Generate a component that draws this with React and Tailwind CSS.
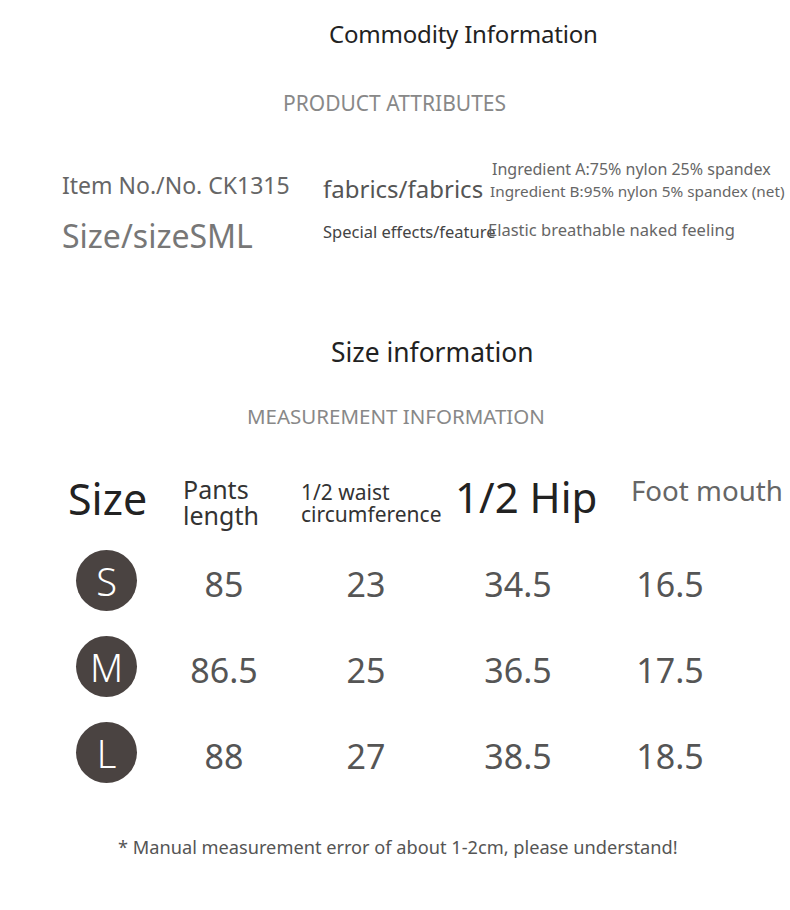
export default function App() {
  const rows = [
    ["S", "85", "23", "34.5", "16.5"],
    ["M", "86.5", "25", "36.5", "17.5"],
    ["L", "88", "27", "38.5", "18.5"],
  ];
  return (
    <div className="w-[790px] h-[910px] bg-white overflow-hidden" style={{ fontFamily: '"Noto Sans", "Open Sans", sans-serif' }}>
      <div className="h-[68px] leading-[68px] pl-[329px] text-[24px] text-[#222] tracking-[-0.2px] whitespace-nowrap">Commodity Information</div>
      <div className="h-[70px] leading-[70px] pl-[283px] text-[21px] text-[#888] whitespace-nowrap">PRODUCT ATTRIBUTES</div>

      <div className="h-[64px] flex whitespace-nowrap">
        <div className="w-[323px] shrink-0 pl-[62px] pt-[31px] text-[23px] leading-[32px] text-[#666]">Item No./No. CK1315</div>
        <div className="w-[167px] shrink-0 pt-[35px] text-[24px] leading-[32px] text-[#555]">fabrics/fabrics</div>
        <div className="flex flex-col pt-[20px]">
          <div className="pl-[2px] text-[16px] leading-[22px] text-[#666]">Ingredient A:75% nylon 25% spandex</div>
          <div className="text-[15.3px] leading-[22px] text-[#666]">Ingredient B:95% nylon 5% spandex (net)</div>
        </div>
      </div>
      <div className="h-[54px] flex whitespace-nowrap">
        <div className="w-[323px] shrink-0 pl-[62px] pt-[14px] text-[32px] leading-[40px] text-[#777]">Size/sizeSML</div>
        <div className="w-[165px] shrink-0 pt-[19px] text-[16.5px] leading-[22px] text-[#444]">Special effects/feature</div>
        <div className="pt-[17px] text-[16.5px] leading-[22px] text-[#666]">Elastic breathable naked feeling</div>
      </div>

      <div className="mt-[76px] h-[40px] leading-[40px] pl-[331px] text-[26.4px] text-[#222] whitespace-nowrap">Size information</div>
      <div className="mt-[29px] h-[30px] leading-[30px] pl-[247px] text-[20.5px] text-[#888] whitespace-nowrap">MEASUREMENT INFORMATION</div>

      <div className="mt-[39px] h-[60px] flex items-start whitespace-nowrap">
        <div className="w-[183px] shrink-0 pl-[68px] pt-[4px] text-[43px] leading-[50px] text-[#222]">Size</div>
        <div className="w-[118px] shrink-0 pt-[6px] text-[25px] leading-[26px] text-[#333]">Pants<br />length</div>
        <div className="w-[154px] shrink-0 pt-[11px] text-[21px] leading-[22px] text-[#333]">1/2 waist<br />circumference</div>
        <div className="w-[176px] shrink-0 pt-[2px] text-[42px] leading-[50px] text-[#222]">1/2 Hip</div>
        <div className="pt-[3px] text-[27.7px] leading-[34px] text-[#666]">Foot mouth</div>
      </div>

      <div className="mt-[20px] flex flex-col gap-[25px]">
        {rows.map((r) => (
          <div key={r[0]} className="flex items-center h-[61px] pl-[76px]">
            <div className="w-[61px] h-[61px] shrink-0 rounded-full bg-[#4a4341] flex items-center justify-center text-white text-[38px] leading-none font-light">{r[0]}</div>
            <div className="w-[100px] shrink-0 mt-[6px] text-center text-[34px] leading-[40px] text-[#555] ml-[37px]">{r[1]}</div>
            <div className="w-[100px] shrink-0 mt-[6px] text-center text-[34px] leading-[40px] text-[#555] ml-[42px]">{r[2]}</div>
            <div className="w-[100px] shrink-0 mt-[6px] text-center text-[34px] leading-[40px] text-[#555] ml-[52px]">{r[3]}</div>
            <div className="w-[100px] shrink-0 mt-[6px] text-center text-[34px] leading-[40px] text-[#555] ml-[52px]">{r[4]}</div>
          </div>
        ))}
      </div>

      <div className="mt-[51px] h-[26px] leading-[26px] pl-[118px] text-[18.2px] text-[#555] whitespace-nowrap">* Manual measurement error of about 1-2cm, please understand!</div>
    </div>
  );
}
